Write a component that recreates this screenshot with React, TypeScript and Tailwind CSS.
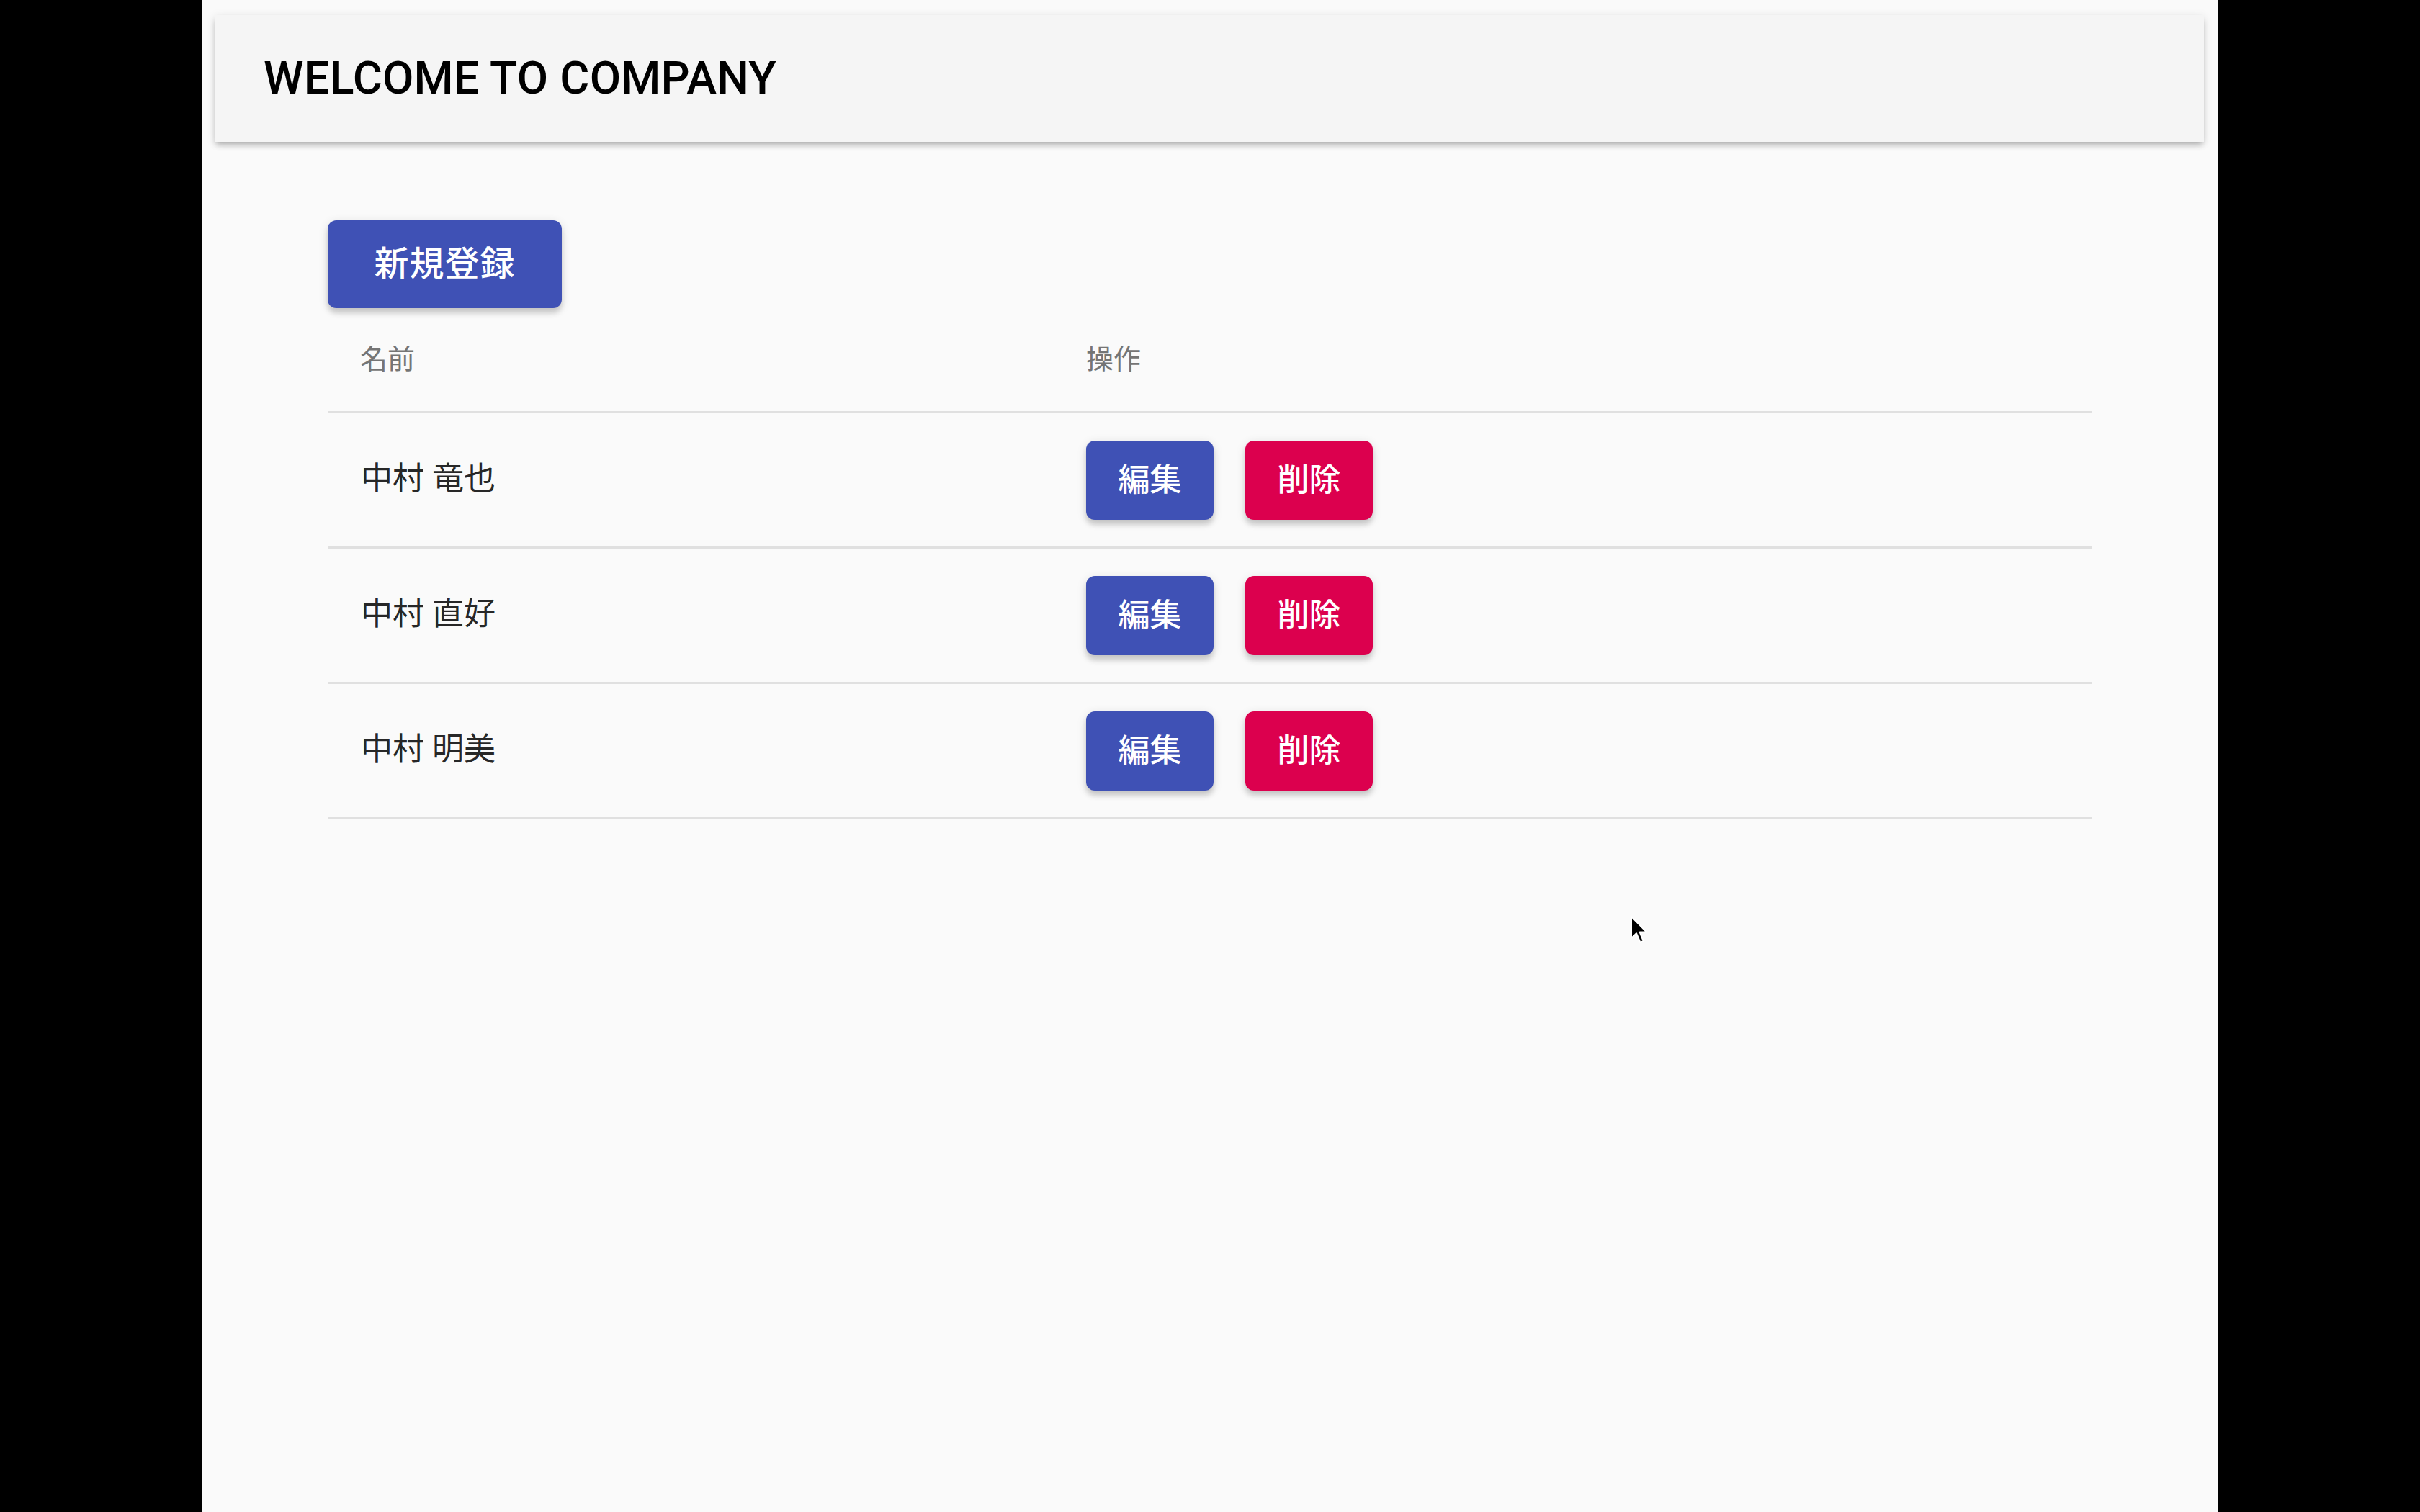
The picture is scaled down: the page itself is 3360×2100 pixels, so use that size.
const people = ["中村 竜也", "中村 直好", "中村 明美"];

const font = "font-['Roboto','Noto_Sans_CJK_JP',sans-serif]";

const Cursor = () => (
  <svg
    className="absolute left-[1983px] top-[1271px] pointer-events-none"
    width="28"
    height="42"
    viewBox="0 0 14 21"
  >
    <path
      d="M1 1 L1 16 L4.5 12.6 L7.2 19 L9.4 18 L6.8 11.8 L11.6 11.8 Z"
      fill="#000"
      stroke="#fff"
      strokeWidth="1"
      strokeLinejoin="round"
    />
  </svg>
);

export default function App() {
  return (
    <div className={`w-[3360px] h-[2100px] bg-black flex justify-center ${font}`}>
      <div className="relative w-[2800px] h-full bg-[#fafafa]">
        {/* App bar */}
        <header className="ml-[18px] mr-[20px] mt-[21px] h-[176px] bg-[#f5f5f5] flex items-center pl-[68px] shadow-[0_6px_8px_-2px_rgba(0,0,0,0.25),0_2px_12px_rgba(0,0,0,0.1)]">
          <h1 className="text-[63px] font-medium text-black tracking-[0.2px]">WELCOME TO COMPANY</h1>
        </header>

        <main className="mx-[175px] mt-[109px]">
          <button className="w-[325px] h-[122px] rounded-[12px] bg-[#3f51b5] text-white text-[48px] font-medium tracking-[1px] shadow-[0_7px_7px_rgba(0,0,0,0.14),0_3px_14px_rgba(0,0,0,0.12)]">
            新規登録
          </button>

          {/* table */}
          <div className="w-full">
            <div className="flex h-[146px] items-center border-b-[3px] border-[#e0e0e0] text-[38px] text-[#757575]">
              <div className="w-[1008px] pl-[45px]">名前</div>
              <div className="pl-[45px]">操作</div>
            </div>
            {people.map((name) => (
              <div
                key={name}
                className="flex h-[188px] items-center border-b-[3px] border-[#e0e0e0] text-[44px] text-[rgba(0,0,0,0.87)]"
              >
                <div className="w-[1008px] pl-[46px] pb-[4px]">{name}</div>
                <div className="flex gap-[44px] pl-[45px]">
                  <button className="w-[177px] h-[110px] rounded-[12px] bg-[#3f51b5] text-white text-[44px] font-medium shadow-[0_7px_7px_rgba(0,0,0,0.14),0_3px_14px_rgba(0,0,0,0.12)]">
                    編集
                  </button>
                  <button className="w-[177px] h-[110px] rounded-[12px] bg-[#dc004e] text-white text-[44px] font-medium shadow-[0_7px_7px_rgba(0,0,0,0.14),0_3px_14px_rgba(0,0,0,0.12)]">
                    削除
                  </button>
                </div>
              </div>
            ))}
          </div>
        </main>

        <Cursor />
      </div>
    </div>
  );
}
